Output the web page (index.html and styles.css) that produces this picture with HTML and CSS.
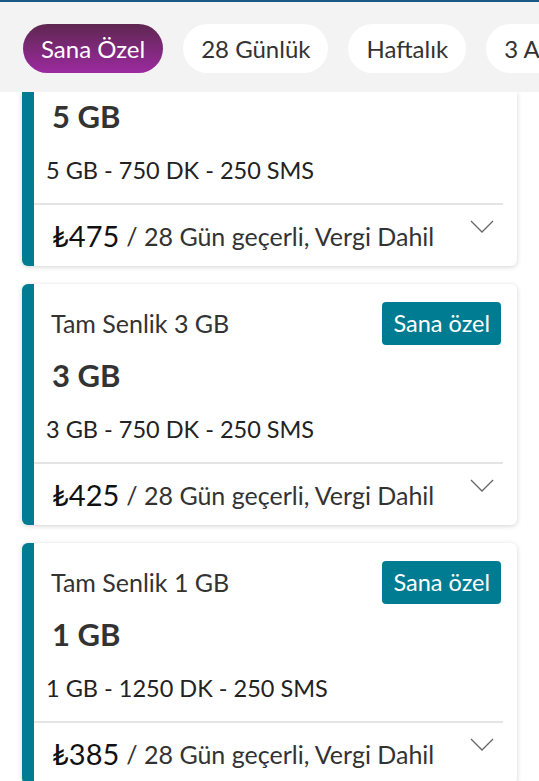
FILE: index.html
```html
<!DOCTYPE html>
<html lang="tr">
<head>
<meta charset="utf-8">
<title>Paketler</title>
<link rel="stylesheet" href="styles.css">
</head>
<body>
<div class="topline"></div>
<header class="tabs">
  <span class="pill active">Sana Özel</span>
  <span class="pill">28 Günlük</span>
  <span class="pill">Haftalık</span>
  <span class="pill">3 Aylık</span>
</header>
<main class="viewport">
  <div class="list">
    <article class="card partial">
      <div class="big">5 GB</div>
      <div class="spec">5 GB - 750 DK - 250 SMS</div>
      <div class="price-row">
        <span class="price">₺475</span><span class="period">/ 28 Gün geçerli, Vergi Dahil</span>
        <svg class="chev" viewBox="0 0 24 14" width="24" height="14"><polyline points="1,1 12,12 23,1" fill="none" stroke="#666" stroke-width="1.3"/></svg>
      </div>
    </article>
    <article class="card">
      <div class="card-head">
        <span class="name">Tam Senlik 3 GB</span>
        <span class="badge">Sana özel</span>
      </div>
      <div class="big">3 GB</div>
      <div class="spec">3 GB - 750 DK - 250 SMS</div>
      <div class="price-row">
        <span class="price">₺425</span><span class="period">/ 28 Gün geçerli, Vergi Dahil</span>
        <svg class="chev" viewBox="0 0 24 14" width="24" height="14"><polyline points="1,1 12,12 23,1" fill="none" stroke="#666" stroke-width="1.3"/></svg>
      </div>
    </article>
    <article class="card">
      <div class="card-head">
        <span class="name">Tam Senlik 1 GB</span>
        <span class="badge">Sana özel</span>
      </div>
      <div class="big">1 GB</div>
      <div class="spec">1 GB - 1250 DK - 250 SMS</div>
      <div class="price-row">
        <span class="price">₺385</span><span class="period">/ 28 Gün geçerli, Vergi Dahil</span>
        <svg class="chev" viewBox="0 0 24 14" width="24" height="14"><polyline points="1,1 12,12 23,1" fill="none" stroke="#666" stroke-width="1.3"/></svg>
      </div>
    </article>
  </div>
</main>
</body>
</html>
```
FILE: styles.css
```css
* { box-sizing: border-box; }
html, body { margin: 0; padding: 0; }
body {
  width: 539px;
  height: 781px;
  overflow: hidden;
  background: #ffffff;
  font-family: "Lato", "DejaVu Sans", sans-serif;
  color: #333333;
}
.topline {
  height: 2px;
  background: #1b5886;
}
.tabs {
  height: 90px;
  background: #f3f3f3;
  display: flex;
  align-items: flex-start;
  gap: 20px;
  padding: 22px 0 0 23px;
  white-space: nowrap;
  overflow: hidden;
}
.pill {
  flex: none;
  height: 49px;
  line-height: 49px;
  padding: 0 18px;
  border-radius: 25px;
  background: #ffffff;
  font-size: 24px;
  color: #333333;
}
.pill.active {
  background: linear-gradient(180deg, #5e2750 0%, #9c2aa0 100%);
  color: #ffffff;
}
.viewport {
  height: 689px;
  overflow: hidden;
}
.list {
  padding: 0 22px 0 22px;
  display: flex;
  flex-direction: column;
  gap: 18px;
}
.card {
  height: 241px;
  background: #ffffff;
  border-left: 12px solid #007c92;
  border-radius: 6px;
  box-shadow: 0 1px 5px rgba(0, 0, 0, 0.18);
  padding: 18px 0 0 0;
  display: flex;
  flex-direction: column;
}
.card.partial {
  height: 174px;
  padding-top: 2px;
  border-top-left-radius: 0;
  border-top-right-radius: 0;
}
.card.partial .big {
  margin-top: 0;
}
.card-head {
  display: flex;
  justify-content: space-between;
  align-items: center;
  height: 43px;
  padding: 0 16px 0 17px;
}
.name {
  font-size: 25px;
  color: #333333;
  margin-top: -2px;
}
.badge {
  height: 43px;
  line-height: 43px;
  padding: 0 11px;
  background: #007c92;
  color: #ffffff;
  border-radius: 4px;
  font-size: 23.5px;
}
.big {
  margin-top: 8px;
  padding-left: 18px;
  font-size: 31px;
  font-weight: 700;
  line-height: 44px;
  color: #333333;
}
.spec {
  margin-top: 12px;
  padding-left: 12px;
  font-size: 23.5px;
  line-height: 40px;
  color: #222222;
}
.price-row {
  margin: 13px 14px 0 0;
  border-top: 2px solid #e4e4e4;
  flex: 1;
  display: flex;
  align-items: center;
  padding-left: 18px;
  position: relative;
}
.price {
  font-size: 29px;
  color: #111111;
  margin-right: 7px;
}
.period {
  font-size: 25px;
  color: #333333;
}
.chev {
  position: absolute;
  right: 9px;
  top: 15px;
}
```
